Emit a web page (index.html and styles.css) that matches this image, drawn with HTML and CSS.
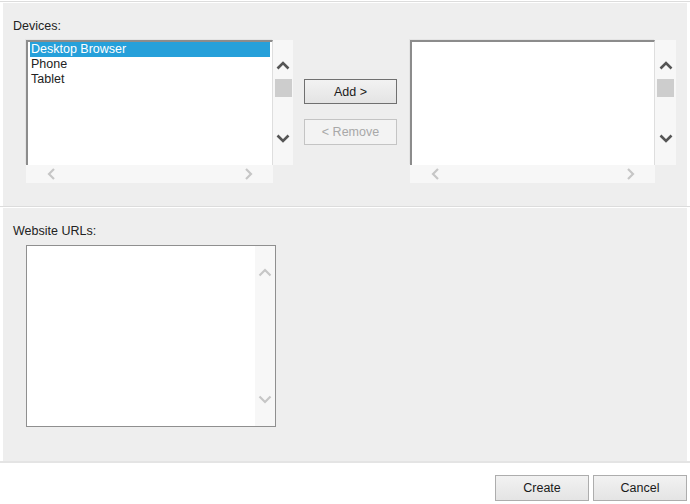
FILE: index.html
```html
<!DOCTYPE html>
<html lang="en">
  <head>
    <meta charset="UTF-8">
    <meta name="viewport" content="width=device-width, initial-scale=1.0">
    <title>New Test Run</title>
    <link rel="stylesheet" href="styles.css">
  </head>

  <body>
    <div class="rule"></div>
    <section class="panel">
      <div class="label">Devices:</div>
      <div class="picker">
        <div class="listbox">
          <ul class="list">
            <li class="selected">Desktop Browser</li>
            <li>Phone</li>
            <li>Tablet</li>
          </ul>
          <div class="vscroll">
            <svg class="chev" width="14" height="10" viewBox="0 0 14 10"><path d="M1.5 8.5 L7 3 L12.5 8.5" /></svg>
            <div class="thumb"></div>
            <svg class="chev down" width="14" height="10" viewBox="0 0 14 10"><path d="M1.5 1.5 L7 7 L12.5 1.5" /></svg>
          </div>
          <div class="hscroll">
            <svg class="chev light" width="10" height="12" viewBox="0 0 10 12"><path d="M8 1 L3 6 L8 11" /></svg>
            <svg class="chev light" width="10" height="12" viewBox="0 0 10 12"><path d="M2 1 L7 6 L2 11" /></svg>
          </div>
        </div>

        <div class="move-buttons">
          <button class="btn add">Add &gt;</button>
          <button class="btn remove" disabled>&lt; Remove</button>
        </div>

        <div class="listbox wide">
          <ul class="list"></ul>
          <div class="vscroll">
            <svg class="chev" width="14" height="10" viewBox="0 0 14 10"><path d="M1.5 8.5 L7 3 L12.5 8.5" /></svg>
            <div class="thumb"></div>
            <svg class="chev down" width="14" height="10" viewBox="0 0 14 10"><path d="M1.5 1.5 L7 7 L12.5 1.5" /></svg>
          </div>
          <div class="hscroll">
            <svg class="chev light" width="10" height="12" viewBox="0 0 10 12"><path d="M8 1 L3 6 L8 11" /></svg>
            <svg class="chev light" width="10" height="12" viewBox="0 0 10 12"><path d="M2 1 L7 6 L2 11" /></svg>
          </div>
        </div>
      </div>
    </section>

    <div class="rule"></div>
    <section class="panel urls">
      <div class="label">Website URLs:</div>
      <div class="textbox">
        <div class="text-area"></div>
        <div class="vscroll pale">
          <svg class="chev light" width="14" height="10" viewBox="0 0 14 10"><path d="M1.5 8.5 L7 3 L12.5 8.5" /></svg>
          <svg class="chev light down" width="14" height="10" viewBox="0 0 14 10"><path d="M1.5 1.5 L7 7 L12.5 1.5" /></svg>
        </div>
      </div>
    </section>

    <div class="rule bottom"></div>
    <footer class="footer">
      <button class="btn">Create</button>
      <button class="btn">Cancel</button>
    </footer>
  </body>

</html>
```

FILE: styles.css
```css
* {
  box-sizing: border-box;
  margin: 0;
  padding: 0;
}

body {
  font-family: "Liberation Sans", Arial, sans-serif;
  font-size: 12.5px;
  line-height: 15px;
  color: #222;
  background: white;
  padding-top: 1px;
  width: 690px;
  height: 504px;
  overflow: hidden;
}

.rule {
  height: 1px;
  background: #dcdcdc;
  margin-bottom: 1px;
}

.rule.bottom {
  height: 2px;
  background: #e4e4e4;
  margin-bottom: 0;
}

.panel {
  margin: 0 3px;
  background: #eeeeee;
  height: 203px;
  padding: 16px 10px 0;
}

.panel.urls {
  height: 253px;
}

.label {
  margin-bottom: 6px;
}

.picker {
  display: flex;
  align-items: flex-start;
  margin-left: 13px;
}

/* list box with its scroll bars */
.listbox {
  display: grid;
  grid-template-columns: 247px 20px;
  grid-template-rows: 125px 18px;
}

.listbox.wide {
  grid-template-columns: 245px 21px;
  margin-left: 13px;
}

.list {
  list-style: none;
  background: white;
  border-left: 2px solid #8c8c8c;
  border-top: 2px solid #8c8c8c;
  border-right: 1px solid #dedede;
  box-shadow: -1px -1px 0 #e4e4e4;
  padding: 0 2px;
}

.list li {
  padding-left: 1px;
  height: 15px;
}

.list li.selected {
  background: #26a0da;
  color: white;
}

.vscroll {
  display: flex;
  flex-direction: column;
  align-items: center;
  background: #f7f7f7;
  padding: 20px 0 21px;
}

.vscroll .thumb {
  width: 17px;
  height: 18px;
  background: #cdcdcd;
  margin-top: 9px;
}

.vscroll .down {
  margin-top: auto;
}

.hscroll {
  display: flex;
  justify-content: space-between;
  align-items: center;
  background: #f7f7f7;
  padding: 0 19px 0 20px;
}

.chev path {
  fill: none;
  stroke: #555;
  stroke-width: 2.6;
}

.chev.light path {
  stroke: #c6c6c6;
  stroke-width: 2.2;
}

/* Add / Remove buttons */
.move-buttons {
  display: flex;
  flex-direction: column;
  gap: 15px;
  margin: 39px 0 0 11px;
}

.btn {
  font-family: inherit;
  font-size: 12.5px;
  color: #1a1a1a;
  width: 94px;
  height: 26px;
  border: 1px solid #adadad;
  background: linear-gradient(#f2f2f2, #e4e4e4);
}

.btn.add {
  width: 93px;
  height: 25px;
  border-color: #707070;
}

.btn.remove {
  width: 93px;
  color: #a8a8a8;
  border-color: #c4c4c4;
  background: #f3f3f3;
}

/* URL text box */
.textbox {
  display: grid;
  grid-template-columns: 228px 20px;
  width: 250px;
  height: 182px;
  margin-left: 13px;
  border: 1px solid #8f8f8f;
  background: white;
}

.vscroll.pale {
  padding: 21px 0 21px;
}

.footer {
  display: flex;
  justify-content: flex-end;
  gap: 4px;
  padding: 12px 3px 0 0;
}

.footer .btn {
  width: 94px;
}
```
